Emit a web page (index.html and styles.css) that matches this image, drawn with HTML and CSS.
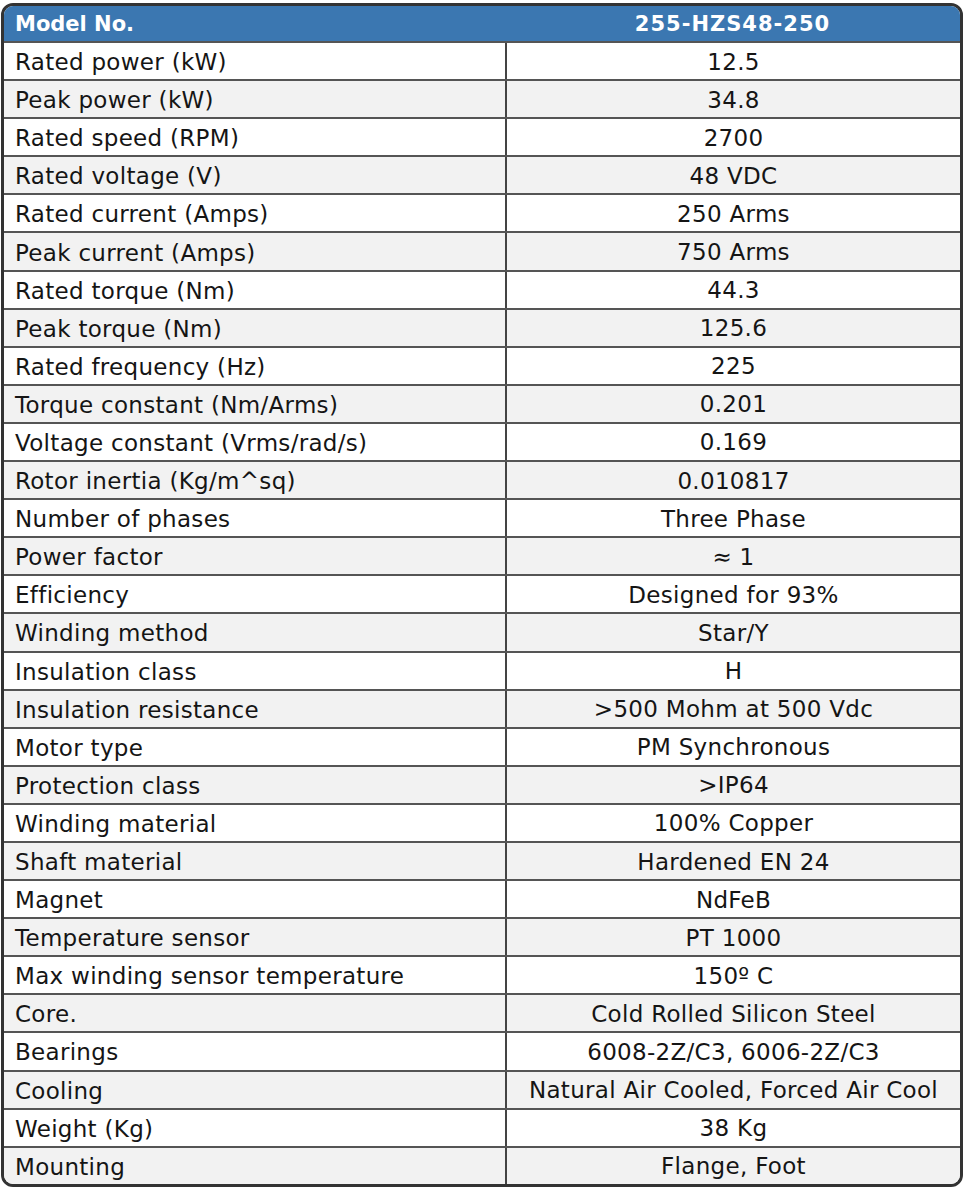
FILE: index.html
```html
<!DOCTYPE html>
<html>
<head>
<meta charset="utf-8">
<link rel="stylesheet" href="styles.css">
</head>
<body>
<div class="spec">
  <div class="row head"><div class="k">Model No.</div><div class="v">255-HZS48-250</div></div>
  <div class="row"><div class="k">Rated power (kW)</div><div class="v">12.5</div></div>
  <div class="row"><div class="k">Peak power (kW)</div><div class="v">34.8</div></div>
  <div class="row"><div class="k">Rated speed (RPM)</div><div class="v">2700</div></div>
  <div class="row"><div class="k">Rated voltage (V)</div><div class="v">48 VDC</div></div>
  <div class="row"><div class="k">Rated current (Amps)</div><div class="v">250 Arms</div></div>
  <div class="row"><div class="k">Peak current (Amps)</div><div class="v">750 Arms</div></div>
  <div class="row"><div class="k">Rated torque (Nm)</div><div class="v">44.3</div></div>
  <div class="row"><div class="k">Peak torque (Nm)</div><div class="v">125.6</div></div>
  <div class="row"><div class="k">Rated frequency (Hz)</div><div class="v">225</div></div>
  <div class="row"><div class="k">Torque constant (Nm/Arms)</div><div class="v">0.201</div></div>
  <div class="row"><div class="k">Voltage constant (Vrms/rad/s)</div><div class="v">0.169</div></div>
  <div class="row"><div class="k">Rotor inertia (Kg/m^sq)</div><div class="v">0.010817</div></div>
  <div class="row"><div class="k">Number of phases</div><div class="v">Three Phase</div></div>
  <div class="row"><div class="k">Power factor</div><div class="v">≈ 1</div></div>
  <div class="row"><div class="k">Efficiency</div><div class="v">Designed for 93%</div></div>
  <div class="row"><div class="k">Winding method</div><div class="v">Star/Y</div></div>
  <div class="row"><div class="k">Insulation class</div><div class="v">H</div></div>
  <div class="row"><div class="k">Insulation resistance</div><div class="v">&gt;500 Mohm at 500 Vdc</div></div>
  <div class="row"><div class="k">Motor type</div><div class="v">PM Synchronous</div></div>
  <div class="row"><div class="k">Protection class</div><div class="v">&gt;IP64</div></div>
  <div class="row"><div class="k">Winding material</div><div class="v">100% Copper</div></div>
  <div class="row"><div class="k">Shaft material</div><div class="v">Hardened EN 24</div></div>
  <div class="row"><div class="k">Magnet</div><div class="v">NdFeB</div></div>
  <div class="row"><div class="k">Temperature sensor</div><div class="v">PT 1000</div></div>
  <div class="row"><div class="k">Max winding sensor temperature</div><div class="v">150º C</div></div>
  <div class="row"><div class="k">Core.</div><div class="v">Cold Rolled Silicon Steel</div></div>
  <div class="row"><div class="k">Bearings</div><div class="v">6008-2Z/C3, 6006-2Z/C3</div></div>
  <div class="row"><div class="k">Cooling</div><div class="v">Natural Air Cooled, Forced Air Cool</div></div>
  <div class="row"><div class="k">Weight (Kg)</div><div class="v">38 Kg</div></div>
  <div class="row"><div class="k">Mounting</div><div class="v">Flange, Foot</div></div>
</div>
</body>
</html>
```
FILE: styles.css
```css
html, body {
  margin: 0;
  padding: 0;
  background: #ffffff;
}
body {
  padding: 3px 0 0 1px;
  font-family: "DejaVu Sans", "Open Sans", sans-serif;
  color: #151515;
}
.spec {
  width: 962px;
  box-sizing: border-box;
  border: 3px solid #333333;
  border-radius: 12px;
  overflow: hidden;
  background: #ffffff;
}
.row {
  display: grid;
  grid-template-columns: 501px 1fr;
  height: 38.1px;
  box-sizing: border-box;
  border-top: 2px solid #555555;
  font-size: 23px;
  line-height: 1;
  letter-spacing: 0.3px;
}
.row:nth-child(odd) {
  background: #f2f2f2;
}
.row.head {
  height: 35px;
  border-top: none;
  background: #3b77b1;
  color: #ffffff;
  font-weight: 700;
  font-size: 21px;
  letter-spacing: 0;
}
.k {
  display: flex;
  align-items: center;
  padding: 3px 0 0 11px;
}
.v {
  display: flex;
  align-items: center;
  justify-content: center;
  padding: 2px 0 0 0;
  border-left: 2px solid #444444;
}
.head .k { padding-top: 1px; }
.head .v { border-left: none; padding-top: 1px; letter-spacing: 1px; }
```
